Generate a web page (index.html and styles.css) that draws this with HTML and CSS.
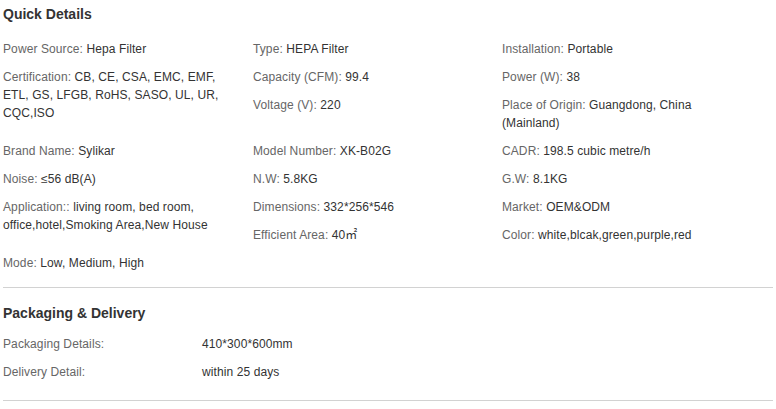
FILE: index.html
```html
<!DOCTYPE html>
<html>
<head>
<meta charset="utf-8">
<link rel="stylesheet" href="styles.css">
</head>
<body>
<div class="page">
  <section class="section quick">
    <h3 class="title">Quick Details</h3>
    <div class="grid">
      <div class="cell"><div class="item"><span class="k">Power Source:</span> <span class="v">Hepa Filter</span></div></div>
      <div class="cell"><div class="item"><span class="k">Type:</span> <span class="v">HEPA Filter</span></div></div>
      <div class="cell"><div class="item"><span class="k">Installation:</span> <span class="v">Portable</span></div></div>

      <div class="cell"><div class="item"><span class="k">Certification:</span> <span class="v">CB, CE, CSA, EMC, EMF, ETL, GS, LFGB, RoHS, SASO, UL, UR, CQC,ISO</span></div></div>
      <div class="cell">
        <div class="item"><span class="k">Capacity (CFM):</span> <span class="v">99.4</span></div>
        <div class="item"><span class="k">Voltage (V):</span> <span class="v">220</span></div>
      </div>
      <div class="cell">
        <div class="item"><span class="k">Power (W):</span> <span class="v">38</span></div>
        <div class="item"><span class="k">Place of Origin:</span> <span class="v">Guangdong, China (Mainland)</span></div>
      </div>

      <div class="cell"><div class="item"><span class="k">Brand Name:</span> <span class="v">Sylikar</span></div></div>
      <div class="cell"><div class="item"><span class="k">Model Number:</span> <span class="v">XK-B02G</span></div></div>
      <div class="cell"><div class="item"><span class="k">CADR:</span> <span class="v">198.5 cubic metre/h</span></div></div>

      <div class="cell"><div class="item"><span class="k">Noise:</span> <span class="v">≤56 dB(A)</span></div></div>
      <div class="cell"><div class="item"><span class="k">N.W:</span> <span class="v">5.8KG</span></div></div>
      <div class="cell"><div class="item"><span class="k">G.W:</span> <span class="v">8.1KG</span></div></div>

      <div class="cell"><div class="item"><span class="k">Application::</span> <span class="v">living room, bed room, office,hotel,Smoking Area,New House</span></div></div>
      <div class="cell">
        <div class="item"><span class="k">Dimensions:</span> <span class="v">332*256*546</span></div>
        <div class="item"><span class="k">Efficient Area:</span> <span class="v">40㎡</span></div>
      </div>
      <div class="cell">
        <div class="item"><span class="k">Market:</span> <span class="v">OEM&amp;ODM</span></div>
        <div class="item"><span class="k">Color:</span> <span class="v">white,blcak,green,purple,red</span></div>
      </div>

      <div class="cell"><div class="item"><span class="k">Mode:</span> <span class="v">Low, Medium, High</span></div></div>
    </div>
  </section>

  <section class="section pack">
    <h3 class="title">Packaging &amp; Delivery</h3>
    <div class="rows">
      <div class="row"><span class="k label">Packaging Details:</span><span class="v">410*300*600mm</span></div>
      <div class="row"><span class="k label">Delivery Detail:</span><span class="v">within 25 days</span></div>
    </div>
  </section>
</div>
</body>
</html>
```

FILE: styles.css
```css
* { box-sizing: border-box; }
html, body { margin: 0; padding: 0; background: #fff; }
body {
  font-family: "Liberation Sans", Arial, "Noto Sans CJK SC", sans-serif;
  font-size: 12px;
  color: #333;
}
.page {
  width: 773px;
  padding-left: 3px;
}
.section {
  border-bottom: 1px solid #d2d2d2;
}
.quick {
  padding-top: 5px;
  padding-bottom: 5px;
}
.pack {
  padding-top: 16px;
  padding-bottom: 9px;
}
.title {
  margin: 0;
  font-size: 14px;
  line-height: 18px;
  font-weight: bold;
  color: #333;
}
.grid {
  margin-top: 17px;
  display: grid;
  grid-template-columns: 250px 249px 1fr;
  align-items: start;
  letter-spacing: 0.1px;
}
.item {
  width: 228px;
  line-height: 18px;
  padding-bottom: 10px;
}
.k { color: #666; }
.v { color: #333; }
.rows {
  margin-top: 13px;
  display: flex;
  flex-direction: column;
  letter-spacing: 0.1px;
}
.row {
  display: flex;
  line-height: 18px;
  padding-bottom: 10px;
}
.label {
  width: 199px;
  flex: none;
}
```
